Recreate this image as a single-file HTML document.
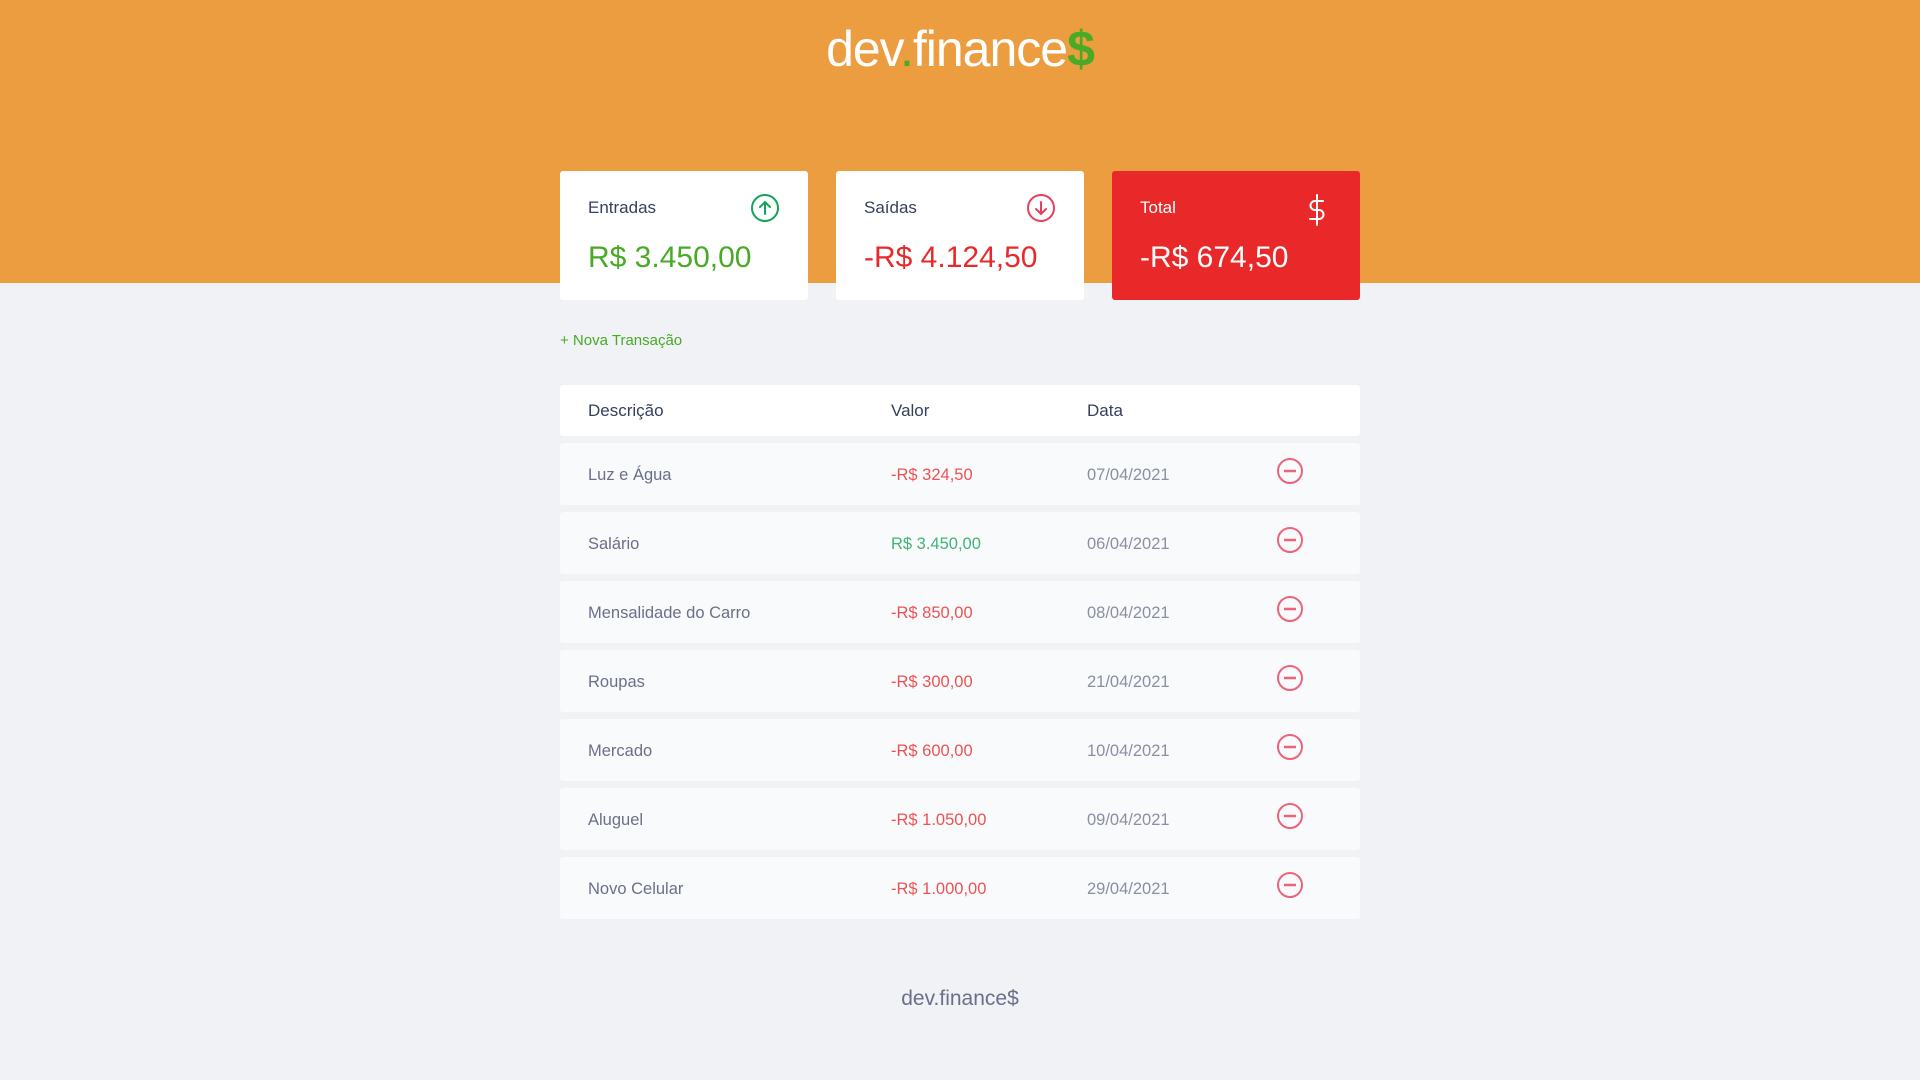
<!DOCTYPE html>
<html><head><meta charset="utf-8"><style>
*{margin:0;padding:0;box-sizing:border-box}
body{width:1920px;height:1080px;background:#F0F2F5;font-family:"Liberation Sans",sans-serif;position:relative;overflow:hidden}
.hdr{position:absolute;left:0;top:0;width:1920px;height:283px;background:#EC9D40}
.logo{position:absolute;top:20px;left:0;width:1920px;text-align:center;color:#fff;font-size:50px;letter-spacing:-1px}
.logo .g{color:#49AA26}
.logo b{color:#49AA26;font-weight:bold}
.card{position:absolute;top:171px;width:248px;height:129px;background:#fff;border-radius:3px;color:#363F5F}
.card .l{position:absolute;left:28px;top:27px;font-size:17px}
.card .v{position:absolute;left:28px;top:70px;font-size:30px}
.card svg{position:absolute;right:28px;top:22px}
.new{position:absolute;left:560px;top:332px;color:#49AA26;font-size:15px}
.row{position:absolute;left:560px;width:800px;height:62px;background:#F9FAFC;border-radius:3px;font-size:16.5px;color:#6b7088}
.row span{position:absolute;top:23px}
.th{background:#fff;height:51px;color:#363F5F;font-size:17px}
.th span{top:16px}
.c1{left:28px}.c2{left:331px}.c3{left:527px;color:#8a8fa3}
.red{color:#E92929 !important;opacity:.8}.grn{color:#12A454 !important;opacity:.8}
.row svg{position:absolute;left:716px;top:14px}
.foot{position:absolute;top:987px;width:1920px;text-align:center;font-size:21px;color:#6b7088}
</style></head><body>
<div class="hdr"></div>
<div class="logo">dev<span class="g">.</span>finance<b>$</b></div>
<div class="card" style="left:560px"><div class="l">Entradas</div>
<svg width="30" height="30" viewBox="0 0 30 30"><circle cx="15" cy="15" r="13" fill="none" stroke="#12A454" stroke-width="2"/><path d="M15 21V9M10 14l5-5 5 5" fill="none" stroke="#12A454" stroke-width="2" stroke-linecap="round" stroke-linejoin="round"/></svg>
<div class="v" style="color:#49AA26">R$ 3.450,00</div></div>
<div class="card" style="left:836px"><div class="l">Saídas</div>
<svg width="30" height="30" viewBox="0 0 30 30"><circle cx="15" cy="15" r="13" fill="none" stroke="#E83F5B" stroke-width="2"/><path d="M15 9v12M10 16l5 5 5-5" fill="none" stroke="#E83F5B" stroke-width="2" stroke-linecap="round" stroke-linejoin="round"/></svg>
<div class="v" style="color:#E92929">-R$ 4.124,50</div></div>
<div class="card" style="left:1112px;background:#E92929;color:#fff"><div class="l">Total</div>
<svg width="30" height="34" viewBox="0 0 30 34"><path d="M15 2v30M21 8h-8a4.5 4.5 0 0 0 0 9h4a4.5 4.5 0 0 1 0 9H8" fill="none" stroke="#fff" stroke-width="2" stroke-linecap="round" stroke-linejoin="round"/></svg>
<div class="v">-R$ 674,50</div></div>
<div class="new">+ Nova Transação</div>
<div class="row th" style="top:385px"><span class="c1">Descrição</span><span class="c2">Valor</span><span class="c3" style="color:#363F5F">Data</span></div>
<div class="row" style="top:443px"><span class="c1">Luz e Água</span><span class="c2 red">-R$ 324,50</span><span class="c3">07/04/2021</span><svg width="28" height="28" viewBox="0 0 28 28"><circle cx="14" cy="14" r="12" fill="none" stroke="#E83F5B" stroke-opacity=".8" stroke-width="2"/><path d="M8 14h12" stroke="#E83F5B" stroke-opacity=".8" stroke-width="2.5"/></svg></div>
<div class="row" style="top:512px"><span class="c1">Salário</span><span class="c2 grn">R$ 3.450,00</span><span class="c3">06/04/2021</span><svg width="28" height="28" viewBox="0 0 28 28"><circle cx="14" cy="14" r="12" fill="none" stroke="#E83F5B" stroke-opacity=".8" stroke-width="2"/><path d="M8 14h12" stroke="#E83F5B" stroke-opacity=".8" stroke-width="2.5"/></svg></div>
<div class="row" style="top:581px"><span class="c1">Mensalidade do Carro</span><span class="c2 red">-R$ 850,00</span><span class="c3">08/04/2021</span><svg width="28" height="28" viewBox="0 0 28 28"><circle cx="14" cy="14" r="12" fill="none" stroke="#E83F5B" stroke-opacity=".8" stroke-width="2"/><path d="M8 14h12" stroke="#E83F5B" stroke-opacity=".8" stroke-width="2.5"/></svg></div>
<div class="row" style="top:650px"><span class="c1">Roupas</span><span class="c2 red">-R$ 300,00</span><span class="c3">21/04/2021</span><svg width="28" height="28" viewBox="0 0 28 28"><circle cx="14" cy="14" r="12" fill="none" stroke="#E83F5B" stroke-opacity=".8" stroke-width="2"/><path d="M8 14h12" stroke="#E83F5B" stroke-opacity=".8" stroke-width="2.5"/></svg></div>
<div class="row" style="top:719px"><span class="c1">Mercado</span><span class="c2 red">-R$ 600,00</span><span class="c3">10/04/2021</span><svg width="28" height="28" viewBox="0 0 28 28"><circle cx="14" cy="14" r="12" fill="none" stroke="#E83F5B" stroke-opacity=".8" stroke-width="2"/><path d="M8 14h12" stroke="#E83F5B" stroke-opacity=".8" stroke-width="2.5"/></svg></div>
<div class="row" style="top:788px"><span class="c1">Aluguel</span><span class="c2 red">-R$ 1.050,00</span><span class="c3">09/04/2021</span><svg width="28" height="28" viewBox="0 0 28 28"><circle cx="14" cy="14" r="12" fill="none" stroke="#E83F5B" stroke-opacity=".8" stroke-width="2"/><path d="M8 14h12" stroke="#E83F5B" stroke-opacity=".8" stroke-width="2.5"/></svg></div>
<div class="row" style="top:857px"><span class="c1">Novo Celular</span><span class="c2 red">-R$ 1.000,00</span><span class="c3">29/04/2021</span><svg width="28" height="28" viewBox="0 0 28 28"><circle cx="14" cy="14" r="12" fill="none" stroke="#E83F5B" stroke-opacity=".8" stroke-width="2"/><path d="M8 14h12" stroke="#E83F5B" stroke-opacity=".8" stroke-width="2.5"/></svg></div>
<div class="foot">dev.finance$</div>
</body></html>
